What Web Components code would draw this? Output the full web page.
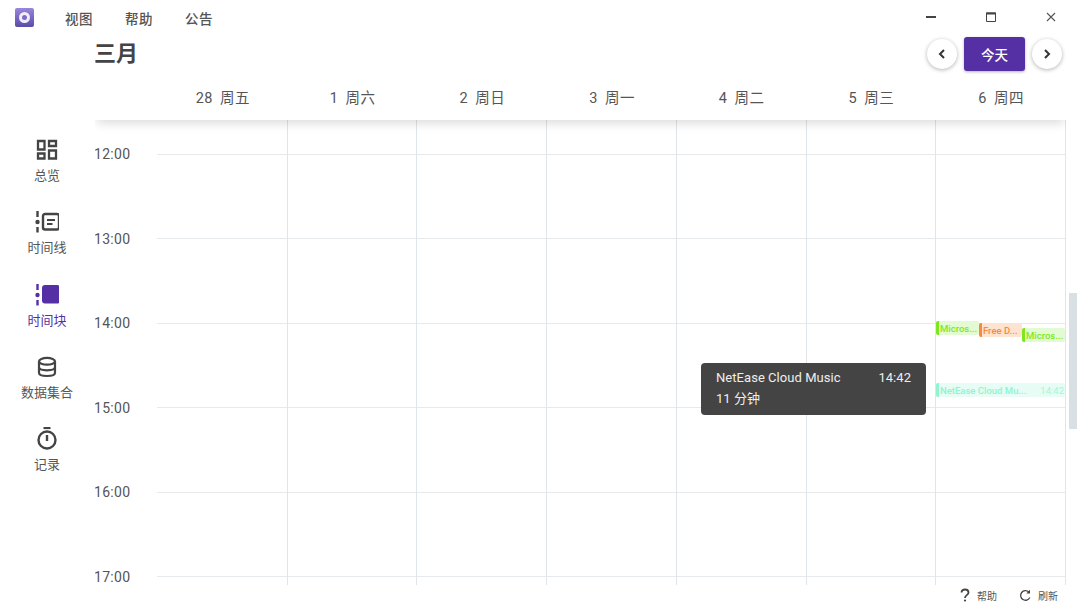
<!DOCTYPE html>
<html lang="zh">
<head>
<meta charset="utf-8">
<title>时间块</title>
<style>
    html, body { margin: 0; height: 100%; overflow: hidden; background: #fff; }
    body {
        font-family: Roboto, "Noto Sans CJK SC", sans-serif;
        color: #444;
        display: flex;
        flex-direction: column;
        height: 607px;
    }
</style>
</head>
<body>
<app-titlebar></app-titlebar>
<div id="shell" style="display:flex;flex:1;min-height:0">
    <app-sidebar>
        <nav-item icon="overview" label="总览"></nav-item>
        <nav-item icon="timeline" label="时间线"></nav-item>
        <nav-item icon="blocks" label="时间块" active></nav-item>
        <nav-item icon="data" label="数据集合"></nav-item>
        <nav-item icon="timer" label="记录"></nav-item>
    </app-sidebar>
    <div id="main" style="flex:1;min-width:0;display:flex;flex-direction:column">
        <cal-header title="三月"></cal-header>
        <week-grid></week-grid>
        <status-bar></status-bar>
    </div>
</div>

<script>
const ICONS = {
    overview: '<path d="M3 3h6.500v8.500H3zM14 3h7v5h-7zM14 12.500h7v8h-7zM3 15.500h6.500v5H3z" fill="none" stroke="currentColor" stroke-width="2.300"/>',
    timeline: '<path d="M2.500 1v6M2.500 17v5.500" stroke="currentColor" stroke-width="2.400"/><circle cx="2.500" cy="12" r="2.200" fill="currentColor"/><rect x="8" y="4" width="16" height="15.500" rx="2" fill="none" stroke="currentColor" stroke-width="2.400"/><path d="M12 10h8M12 14h5.500" stroke="currentColor" stroke-width="2"/>',
    blocks: '<path d="M2.500 1v6M2.500 17v5.500" stroke="currentColor" stroke-width="2.400"/><circle cx="2.500" cy="12" r="2.200" fill="currentColor"/><rect x="7" y="2" width="18" height="18.500" rx="3" fill="currentColor"/>',
    data: '<ellipse cx="12" cy="6.300" rx="8" ry="3.400" fill="none" stroke="currentColor" stroke-width="2.200"/><path d="M4 6.300v11.400c0 2 3.600 3.300 8 3.300s8-1.300 8-3.300V6.300M4 12c0 2 3.600 3.300 8 3.300s8-1.300 8-3.300" fill="none" stroke="currentColor" stroke-width="2.200"/>',
    timer: '<path d="M8.500 1h7" stroke="currentColor" stroke-width="2.200"/><circle cx="12" cy="13" r="8.500" fill="none" stroke="currentColor" stroke-width="2.400"/><path d="M12 8v6" stroke="currentColor" stroke-width="2.400"/>'
};

class AppTitlebar extends HTMLElement {
    constructor() {
        super();
        this.attachShadow({ mode: 'open' });
    }

    connectedCallback() {
        this.shadowRoot.innerHTML = `
            <style>
                :host { display: flex; align-items: center; height: 35px; flex: none; font-size: 13.500px; font-weight: 500; color: #555; }
                .logo { width: 19px; height: 19px; margin-left: 15px; margin-right: 31px; border-radius: 2px;
                    background: linear-gradient(#9a86dc, #5b4aa8); display: flex; align-items: center; justify-content: center; }
                .logo i { width: 5px; height: 5px; border: 3.500px solid #f1eefb; border-radius: 50%; background: #7c6cc8; }
                .menu { width: 60px; letter-spacing: .4px; }
                .win { margin-left: auto; display: flex; align-items: center; color: #444; margin-top: -2px; }
                .win span { width: 60px; display: flex; justify-content: center; }
                svg { display: block; }
            </style>
            <div class="logo"><i></i></div>
            <span class="menu">视图</span>
            <span class="menu">帮助</span>
            <span class="menu">公告</span>
            <div class="win">
                <span><svg width="10" height="10"><path d="M0 5h10" stroke="#444" stroke-width="2"/></svg></span>
                <span><svg width="10" height="10"><path d="M.5 1h9v8.500h-9z" fill="none" stroke="#444"/><path d="M0 1.500h10" stroke="#444" stroke-width="2"/></svg></span>
                <span style="margin-right:-1px"><svg width="10" height="10"><path d="M1 1l8 8M9 1l-8 8" stroke="#555" stroke-width="1.100"/></svg></span>
            </div>
        `;
    }
}

class AppSidebar extends HTMLElement {
    constructor() {
        super();
        this.attachShadow({ mode: 'open' });
        this.shadowRoot.innerHTML = `
            <style>
                :host { display: flex; flex-direction: column; width: 95px; flex: none; padding-top: 103px; box-sizing: border-box; gap: 20.250px; }
            </style>
            <slot></slot>
        `;
    }
}

class NavItem extends HTMLElement {
    constructor() {
        super();
        this.attachShadow({ mode: 'open' });
    }

    connectedCallback() {
        const active = this.hasAttribute('active');
        this.shadowRoot.innerHTML = `
            <style>
                :host { display: flex; flex-direction: column; align-items: center; height: 52px; margin-left: -1px; color: ${active ? '#5530a5' : '#444'}; }
                svg { display: block; }
                span { font-size: 13px; line-height: 18px; margin-top: 5px; color: ${active ? '#5530a5' : '#555'}; }
            </style>
            <svg width="24" height="24" viewBox="0 0 24 24">${ICONS[this.getAttribute('icon')]}</svg>
            <span>${this.getAttribute('label')}</span>
        `;
    }
}

class CalHeader extends HTMLElement {
    constructor() {
        super();
        this.attachShadow({ mode: 'open' });
    }

    connectedCallback() {
        const days = ['28 周五', '1 周六', '2 周日', '3 周一', '4 周二', '5 周三', '6 周四'];
        this.shadowRoot.innerHTML = `
            <style>
                :host { display: block; height: 85px; flex: none; position: relative; z-index: 2; background: #fff; width: 971px;
                    box-shadow: 0 5px 10px -2px rgba(0,0,0,.15); clip-path: inset(0 0 -20px 0); }
                .top { display: flex; align-items: center; height: 38px; }
                h1 { margin: 0 0 0 -1px; font-size: 22px; font-weight: 700; color: #444; line-height: 38px; }
                .nav { margin-left: auto; display: flex; align-items: center; margin-right: 4px; }
                .round { width: 30px; height: 30px; border-radius: 50%; background: #fff; box-shadow: 0 1px 4px rgba(0,0,0,.3);
                    display: flex; align-items: center; justify-content: center; }
                .today { width: 61px; height: 34px; margin: 0 7px; background: #5530a5; color: #fff; border-radius: 3px; font-size: 13.500px; font-weight: 500;
                    display: flex; align-items: center; justify-content: center; box-shadow: 0 1px 3px rgba(0,0,0,.3); }
                .days { display: grid; grid-template-columns: repeat(7, 129.720px); margin-left: 63px; height: 47px; align-items: center; }
                .days span { text-align: center; font-size: 14.500px; color: #555; letter-spacing: .5px; word-spacing: 3px; }
            </style>
            <div class="top">
                <h1>${this.getAttribute('title')}</h1>
                <div class="nav">
                    <div class="round"><svg width="10" height="12"><path d="M7 2L3 6l4 4" fill="none" stroke="#333" stroke-width="2"/></svg></div>
                    <div class="today">今天</div>
                    <div class="round"><svg width="10" height="12"><path d="M3 2l4 4-4 4" fill="none" stroke="#333" stroke-width="2"/></svg></div>
                </div>
            </div>
            <div class="days">${days.map(d => `<span>${d}</span>`).join('')}</div>
        `;
    }
}

class EventBlock extends HTMLElement {
    static get observedAttributes() {
        return ['name', 'time'];
    }

    constructor() {
        super();
        this.attachShadow({ mode: 'open' });
    }

    attributeChangedCallback() {
        this.render();
    }

    connectedCallback() {
        this.render();
    }

    render() {
        const color = this.getAttribute('color') || '#7be81f';
        const bg = this.getAttribute('bg') || '#e3fbd2';
        const time = this.getAttribute('time');
        this.shadowRoot.innerHTML = `
            <style>
                :host { display: flex; position: absolute; box-sizing: border-box; align-items: center; justify-content: space-between; height: 14px; background: ${bg}; color: ${color};
                    border-left: 3px solid ${color}; border-radius: 2px; padding-left: 1px; font-size: 9.500px; font-weight: 500; white-space: nowrap; }
                .t { opacity: .75; font-weight: 400; padding-right: 1px; }
            </style>
            <span>${this.getAttribute('name')}</span>
            ${time ? `<span class="t">${time}</span>` : ''}
        `;
    }
}
customElements.define('event-block', EventBlock);

class CalTooltip extends HTMLElement {
    constructor() {
        super();
        this.attachShadow({ mode: 'open' });
        this.shadowRoot.innerHTML = `
            <style>
                :host { display: block; position: absolute; box-sizing: border-box; background: #444; color: #eee; border-radius: 4px;
                    padding: 4px 15px; font-size: 13px; line-height: 21px; letter-spacing: .05px; }
                .row { display: flex; justify-content: space-between; }
            </style>
            <div class="row"><slot name="name"></slot><slot name="time"></slot></div>
            <div><slot name="length"></slot></div>
        `;
    }
}

class WeekGrid extends HTMLElement {
    constructor() {
        super();
        this.attachShadow({ mode: 'open' });
    }

    connectedCallback() {
        const hours = ['12:00', '13:00', '14:00', '15:00', '16:00', '17:00'];
        const cols = Array.from({ length: 7 }, () => '<div class="col"></div>').join('');
        this.shadowRoot.innerHTML = `
            <style>
                :host { display: block; flex: 1; min-height: 0; position: relative; overflow: hidden; }
                .canvas { position: relative; width: 971px; height: 100%; }
                .rows { padding-top: 34px; }
                .row { height: 84.450px; display: flex; box-sizing: border-box; }
                .row b { width: 63px; flex: none; font-weight: 400; font-size: 14px; line-height: 18px; margin-top: -8.600px; margin-left: -1px; color: #555; letter-spacing: .3px; }
                .row i { flex: 1; display: block; border-top: 1px solid #e6eaec; }
                .cols { position: absolute; top: 0; bottom: 0; left: 63px; display: grid; grid-template-columns: repeat(7, 129.720px); }
                .col { border-right: 1px solid #dfe5e8; }
                .bar { position: absolute; left: 974px; top: 173px; width: 8px; height: 136px; background: #d8e0e4; }
            </style>
            <div class="canvas">
                <div class="rows">${hours.map(h => `<div class="row"><b>${h}</b><i></i></div>`).join('')}</div>
                <div class="cols">${cols}</div>
                <event-block name="Micros..." style="left:841px;top:201px;width:43px"></event-block>
                <event-block name="Free D..." color="#f98a3c" bg="#fde3d0" style="left:884px;top:203px;width:43px"></event-block>
                <event-block name="Micros..." style="left:927px;top:208px;width:43px"></event-block>
                <event-block name="NetEase Cloud Mu..." time="14:42" color="#8ff5cf" bg="#e6fcf4" style="left:841px;top:263px;width:129px"></event-block>
                <cal-tooltip style="left:606px;top:243px;width:225px;height:52px">
                    <span slot="name">NetEase Cloud Music</span>
                    <span slot="time">14:42</span>
                    <span slot="length">11 分钟</span>
                </cal-tooltip>
            </div>
            <div class="bar"></div>
        `;
    }
}

class StatusBar extends HTMLElement {
    constructor() {
        super();
        this.attachShadow({ mode: 'open' });
        this.shadowRoot.innerHTML = `
            <style>
                :host { display: flex; align-items: center; justify-content: flex-end; box-sizing: border-box; height: 22px; flex: none; font-size: 10px; color: #555; padding: 0 22px 2px 0; gap: 22px; }
                div { display: flex; align-items: center; gap: 6px; }
                svg { display: block; }
            </style>
            <div><svg width="12" height="14"><path d="M2.500 4.500C2.500 2.500 4 1.500 6 1.500s3.500 1 3.500 3c0 2.800-3.500 2.500-3.500 5.500" fill="none" stroke="#444" stroke-width="1.800"/><circle cx="6" cy="12.500" r="1.100" fill="#444"/></svg>帮助</div>
            <div><svg width="13" height="13" viewBox="0 0 13 13"><path d="M10.800 8.500A4.800 4.800 0 1 1 9.800 3" fill="none" stroke="#444" stroke-width="1.300"/><path d="M11 .8v3.700H7.300z" fill="#444"/></svg>刷新</div>
        `;
    }
}

customElements.define('app-titlebar', AppTitlebar);
customElements.define('app-sidebar', AppSidebar);
customElements.define('nav-item', NavItem);
customElements.define('cal-header', CalHeader);
customElements.define('cal-tooltip', CalTooltip);
customElements.define('week-grid', WeekGrid);
customElements.define('status-bar', StatusBar);
</script>
</body>
</html>
